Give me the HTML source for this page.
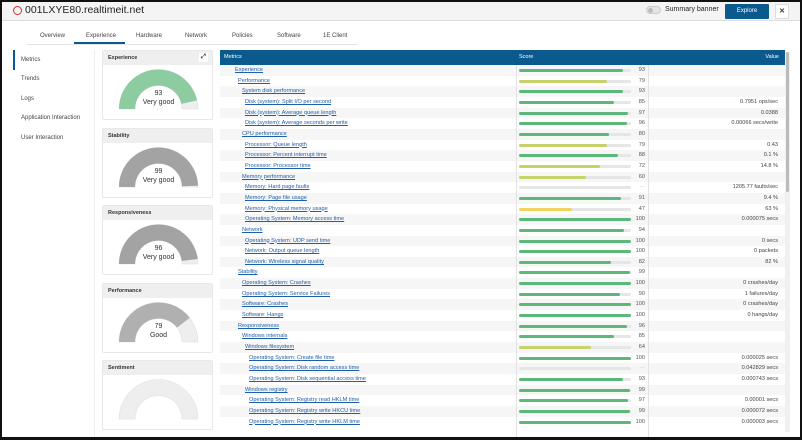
<!DOCTYPE html>
<html style="overflow:hidden;width:802px;height:440px"><head><meta charset="utf-8"><style>
*{margin:0;padding:0;box-sizing:border-box}
body{width:802px;height:440px;background:#fff;font-family:"Liberation Sans",sans-serif;position:relative;overflow:hidden;color:#333}
.frame{position:absolute;left:0;top:0;width:802px;height:440px;border:2px solid #111;border-bottom-width:3px;pointer-events:none;z-index:10}
.hdr{position:absolute;left:0;top:0;width:802px;height:21px;background:#f4f4f4;border-bottom:1px solid #ddd}
.title{position:absolute;left:13px;top:4px;font-size:10.5px;color:#222;display:flex;align-items:center}
.title i{display:inline-block;width:9px;height:9px;border:1.5px solid #d9302c;border-radius:50%;margin-right:3px}
.tog{position:absolute;left:646px;top:6px;width:15px;height:8px;border-radius:4px;background:#e4e4e4;border:1px solid #ccc}
.tog:before{content:"";position:absolute;left:1px;top:1px;width:5px;height:5px;border-radius:50%;background:#bbb}
.sb{position:absolute;left:665px;top:6px;font-size:7px;color:#222}
.exp{position:absolute;left:725px;top:4px;width:44px;height:15px;background:#0b5a8e;color:#fff;font-size:6px;text-align:center;line-height:15px;border-radius:1px}
.x{position:absolute;left:775px;top:4px;width:14px;height:15px;background:#fff;border:1px solid #ddd;font-size:7px;text-align:center;line-height:13px;font-weight:bold}
.tab{position:absolute;top:33px;font-size:6px;color:#444}
.tline{position:absolute;left:27px;top:44px;width:331px;height:1px;background:#e5e5e5}
.tact{position:absolute;left:74px;top:42px;width:51px;height:2px;background:#0b5a8e}
.nav{position:absolute;left:13px;top:50px;width:82px;height:388px;border-right:1px solid #eee}
.nav div{position:absolute;left:8px;font-size:6px;color:#444}
.nact{position:absolute;left:13px;top:50px;width:2px;height:20px;background:#0b5a8e}
.card{position:absolute;left:102px;width:111px;height:70px;border:1px solid #e8e8e8;border-radius:2px;background:#fff}
.ch{height:14px;background:#efefef;font-size:5.5px;font-weight:bold;color:#333;padding:4px 0 0 5px}
.card svg{position:absolute;left:0;top:14px}
.gt{position:absolute;left:0;width:111px;text-align:center;font-size:7px;color:#333}
.tbl{position:absolute;left:220px;top:50px;width:565px}
.th{height:15px;background:#0b5a8e;color:#fff;font-size:5.5px;position:relative}
.th span{position:absolute;top:4px}
.r{height:10.67px;position:relative;font-size:5.6px}
.r:nth-child(odd){background:#f6f6f6}
.r a{position:absolute;top:2px;color:#1f5ea8;text-decoration:underline;white-space:nowrap}
.r b{position:absolute;left:299px;top:4px;width:112px;height:3px;background:#e6e6e6;border-radius:2px}
.r b i{display:block;height:3px;border-radius:2px;background:#5cb87a}
.r b i.y{background:#c6d36a}.r b i.o{background:#f3d35f}
.r em{position:absolute;left:405px;width:20px;text-align:right;top:2px;font-style:normal;color:#555}
.r u{position:absolute;right:7px;top:2px;text-decoration:none;color:#444}
.vl{position:absolute;width:1px;height:372px;background:#e2e2e2}
.scr{position:absolute;left:785px;top:52px;width:5px;height:380px;background:#f0f0f0}
.scr:before{content:"";position:absolute;left:1px;top:0;width:3px;height:140px;background:#bbb;border-radius:2px}
</style></head><body>
<div class="hdr"></div>
<div class="title"><i></i>001LXYE80.realtimeit.net</div>
<div class="tog"></div><div class="sb">Summary banner</div>
<div class="exp">Explore</div><div class="x">✕</div>
<div class="tab" style="left:40px">Overview</div>
<div class="tab" style="left:86px">Experience</div>
<div class="tab" style="left:136px">Hardware</div>
<div class="tab" style="left:185px">Network</div>
<div class="tab" style="left:232px">Policies</div>
<div class="tab" style="left:277px">Software</div>
<div class="tab" style="left:323px">1E Client</div>
<div class="tline"></div><div class="tact"></div>
<div class="nav">
<div style="top:7px">Metrics</div><div style="top:26px">Trends</div><div style="top:46px">Logs</div><div style="top:65px">Application Interaction</div><div style="top:85px">User Interaction</div>
</div>
<div class="nact"></div>

<div class="card" style="top:50px"><div class="ch">Experience<span style="position:absolute;right:4px;top:2px;width:9px;height:9px;background:#fff;font-size:6px;line-height:9px;text-align:center">⤢</span></div>
<svg width="111" height="55"><path d="M16,44 A39.5,39.5 0 0 1 95,44 L79,44 A23.5,23.5 0 0 0 32,44Z" fill="#eee" stroke="#ddd" stroke-width=".5"/><path d="M16,44 A39.5,39.5 0 0 1 94.05,35.39 L78.44,38.88 A23.5,23.5 0 0 0 32,44Z" fill="#8dcba0"/></svg>
<div class="gt" style="top:39px">93</div><div class="gt" style="top:48px">Very good</div></div>

<div class="card" style="top:128px"><div class="ch">Stability</div>
<svg width="111" height="55"><path d="M16,44 A39.5,39.5 0 0 1 95,44 L79,44 A23.5,23.5 0 0 0 32,44Z" fill="#eee" stroke="#ddd" stroke-width=".5"/><path d="M16,44 A39.5,39.5 0 0 1 94.98,42.76 L78.99,43.26 A23.5,23.5 0 0 0 32,44Z" fill="#a3a3a3"/></svg>
<div class="gt" style="top:39px">99</div><div class="gt" style="top:48px">Very good</div></div>

<div class="card" style="top:205px"><div class="ch">Responsiveness</div>
<svg width="111" height="55"><path d="M16,44 A39.5,39.5 0 0 1 95,44 L79,44 A23.5,23.5 0 0 0 32,44Z" fill="#eee" stroke="#ddd" stroke-width=".5"/><path d="M16,44 A39.5,39.5 0 0 1 94.69,39.05 L78.81,41.06 A23.5,23.5 0 0 0 32,44Z" fill="#a3a3a3"/></svg>
<div class="gt" style="top:39px">96</div><div class="gt" style="top:48px">Very good</div></div>

<div class="card" style="top:283px"><div class="ch">Performance</div>
<svg width="111" height="55"><path d="M16,44 A39.5,39.5 0 0 1 95,44 L79,44 A23.5,23.5 0 0 0 32,44Z" fill="#eee" stroke="#ddd" stroke-width=".5"/><path d="M16,44 A39.5,39.5 0 0 1 86.71,19.79 L74.07,29.60 A23.5,23.5 0 0 0 32,44Z" fill="#b0b0b0"/></svg>
<div class="gt" style="top:39px">79</div><div class="gt" style="top:48px">Good</div></div>

<div class="card" style="top:360px"><div class="ch">Sentiment</div>
<svg width="111" height="55"><path d="M16,44 A39.5,39.5 0 0 1 95,44 L79,44 A23.5,23.5 0 0 0 32,44Z" fill="#eee" stroke="#ddd" stroke-width=".5"/></svg></div>

<div class="tbl">
<div class="th"><span style="left:4px">Metrics</span><span style="left:299px">Score</span><span style="right:6px">Value</span></div>
<div>
<div class="r"><a style="left:15px">Experience</a><b><i style="width:93%"></i></b><em>93</em></div>
<div class="r"><a style="left:18px">Performance</a><b><i class="y" style="width:79%"></i></b><em>79</em></div>
<div class="r"><a style="left:22px">System disk performance</a><b><i style="width:93%"></i></b><em>93</em></div>
<div class="r"><a style="left:25px">Disk (system): Split I/O per second</a><b><i style="width:85%"></i></b><em>85</em><u>0.7951 ops/sec</u></div>
<div class="r"><a style="left:25px">Disk (system): Average queue length</a><b><i style="width:97%"></i></b><em>97</em><u>0.0388</u></div>
<div class="r"><a style="left:25px">Disk (system): Average seconds per write</a><b><i style="width:96%"></i></b><em>96</em><u>0.00066 secs/write</u></div>
<div class="r"><a style="left:22px">CPU performance</a><b><i style="width:80%"></i></b><em>80</em></div>
<div class="r"><a style="left:25px">Processor: Queue length</a><b><i class="y" style="width:79%"></i></b><em>79</em><u>0.43</u></div>
<div class="r"><a style="left:25px">Processor: Percent interrupt time</a><b><i style="width:88%"></i></b><em>88</em><u>0.1 %</u></div>
<div class="r"><a style="left:25px">Processor: Processor time</a><b><i class="y" style="width:72%"></i></b><em>72</em><u>14.8 %</u></div>
<div class="r"><a style="left:22px">Memory performance</a><b><i class="y" style="width:60%"></i></b><em>60</em></div>
<div class="r"><a style="left:25px">Memory: Hard page faults</a><b></b><em style="color:#ccc">—</em><u>1205.77 faults/sec</u></div>
<div class="r"><a style="left:25px">Memory: Page file usage</a><b><i style="width:91%"></i></b><em>91</em><u>9.4 %</u></div>
<div class="r"><a style="left:25px">Memory: Physical memory usage</a><b><i class="o" style="width:47%"></i></b><em>47</em><u>63 %</u></div>
<div class="r"><a style="left:25px">Operating System: Memory access time</a><b><i style="width:100%"></i></b><em>100</em><u>0.000075 secs</u></div>
<div class="r"><a style="left:22px">Network</a><b><i style="width:94%"></i></b><em>94</em></div>
<div class="r"><a style="left:25px">Operating System: UDP send time</a><b><i style="width:100%"></i></b><em>100</em><u>0 secs</u></div>
<div class="r"><a style="left:25px">Network: Output queue length</a><b><i style="width:100%"></i></b><em>100</em><u>0 packets</u></div>
<div class="r"><a style="left:25px">Network: Wireless signal quality</a><b><i style="width:82%"></i></b><em>82</em><u>82 %</u></div>
<div class="r"><a style="left:18px">Stability</a><b><i style="width:99%"></i></b><em>99</em></div>
<div class="r"><a style="left:22px">Operating System: Crashes</a><b><i style="width:100%"></i></b><em>100</em><u>0 crashes/day</u></div>
<div class="r"><a style="left:22px">Operating System: Service Failures</a><b><i style="width:90%"></i></b><em>90</em><u>1 failures/day</u></div>
<div class="r"><a style="left:22px">Software: Crashes</a><b><i style="width:100%"></i></b><em>100</em><u>0 crashes/day</u></div>
<div class="r"><a style="left:22px">Software: Hangs</a><b><i style="width:100%"></i></b><em>100</em><u>0 hangs/day</u></div>
<div class="r"><a style="left:18px">Responsiveness</a><b><i style="width:96%"></i></b><em>96</em></div>
<div class="r"><a style="left:22px">Windows internals</a><b><i style="width:85%"></i></b><em>85</em></div>
<div class="r"><a style="left:25px">Windows filesystem</a><b><i class="y" style="width:64%"></i></b><em>64</em></div>
<div class="r"><a style="left:29px">Operating System: Create file time</a><b><i style="width:100%"></i></b><em>100</em><u>0.000025 secs</u></div>
<div class="r"><a style="left:29px">Operating System: Disk random access time</a><b></b><em style="color:#ccc">—</em><u>0.042829 secs</u></div>
<div class="r"><a style="left:29px">Operating System: Disk sequential access time</a><b><i style="width:93%"></i></b><em>93</em><u>0.000743 secs</u></div>
<div class="r"><a style="left:25px">Windows registry</a><b><i style="width:99%"></i></b><em>99</em></div>
<div class="r"><a style="left:29px">Operating System: Registry read HKLM time</a><b><i style="width:97%"></i></b><em>97</em><u>0.00001 secs</u></div>
<div class="r"><a style="left:29px">Operating System: Registry write HKCU time</a><b><i style="width:99%"></i></b><em>99</em><u>0.000072 secs</u></div>
<div class="r"><a style="left:29px">Operating System: Registry write HKLM time</a><b><i style="width:100%"></i></b><em>100</em><u>0.000003 secs</u></div>
</div></div>
<div class="vl" style="left:516px;top:65px"></div>
<div class="vl" style="left:648px;top:65px"></div>
<div class="scr"></div>
<div class="frame"></div>
</body></html>
